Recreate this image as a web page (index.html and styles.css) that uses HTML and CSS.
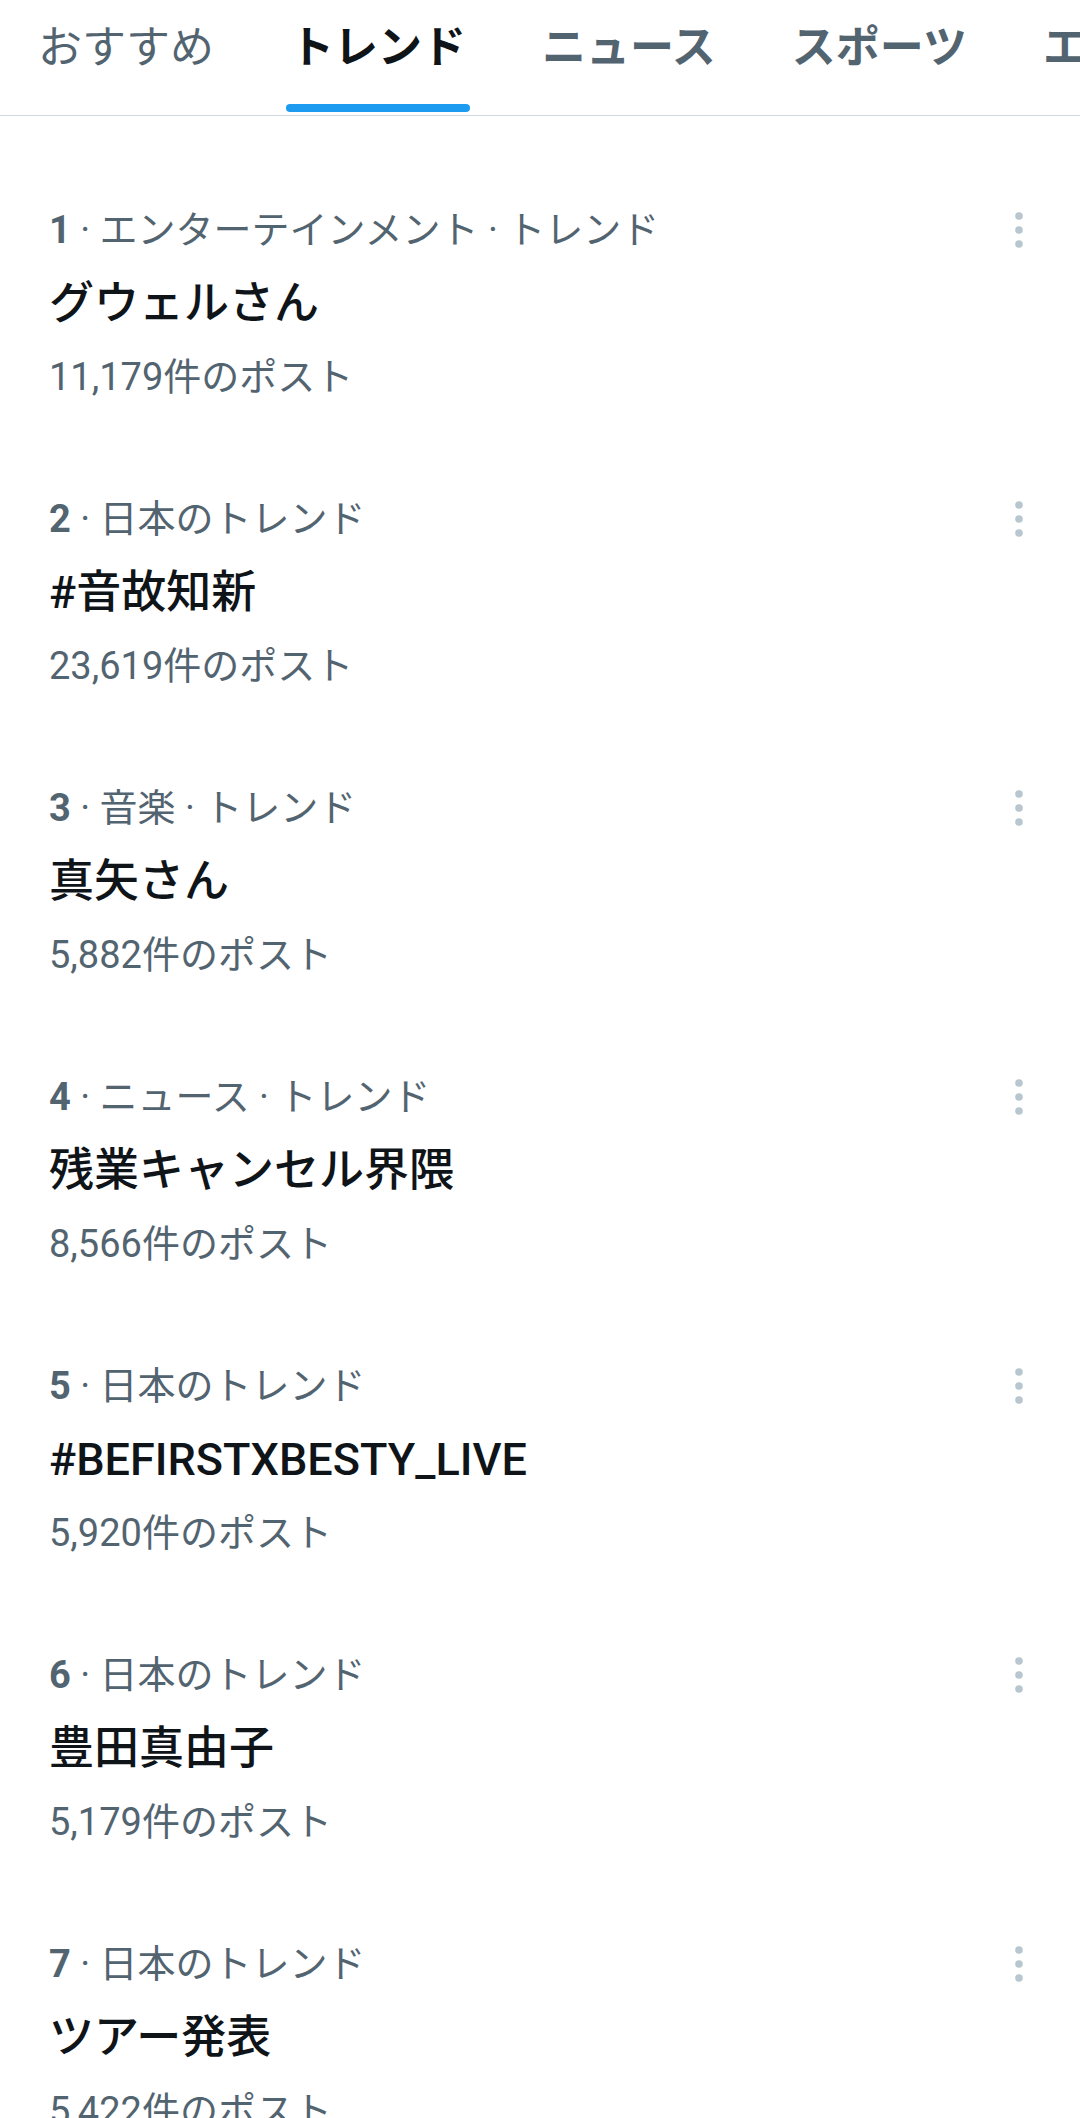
FILE: index.html
```html
<!DOCTYPE html>
<html lang="ja">
<head>
<meta charset="utf-8">
<title>トレンド</title>
<link rel="stylesheet" href="styles.css">
</head>
<body>
<nav class="tabs">
  <div class="tab tab-light"><span class="tab-label">おすすめ</span></div>
  <div class="tab tab-active"><span class="tab-label">トレンド</span><span class="tab-indicator"></span></div>
  <div class="tab"><span class="tab-label">ニュース</span></div>
  <div class="tab"><span class="tab-label">スポーツ</span></div>
  <div class="tab"><span class="tab-label">エンタメ</span></div>
</nav>
<main class="trends">
  <article class="trend">
    <div class="trend-head"><span class="trend-meta"><b class="rank">1</b> · エンターテインメント · トレンド</span><svg class="more" viewBox="0 0 40 40"><circle cx="20" cy="6" r="3.8"/><circle cx="20" cy="20" r="3.8"/><circle cx="20" cy="34" r="3.8"/></svg></div>
    <div class="trend-title">グウェルさん</div>
    <div class="trend-count">11,179件のポスト</div>
  </article>
  <article class="trend">
    <div class="trend-head"><span class="trend-meta"><b class="rank">2</b> · 日本のトレンド</span><svg class="more" viewBox="0 0 40 40"><circle cx="20" cy="6" r="3.8"/><circle cx="20" cy="20" r="3.8"/><circle cx="20" cy="34" r="3.8"/></svg></div>
    <div class="trend-title">#音故知新</div>
    <div class="trend-count">23,619件のポスト</div>
  </article>
  <article class="trend">
    <div class="trend-head"><span class="trend-meta"><b class="rank">3</b> · 音楽 · トレンド</span><svg class="more" viewBox="0 0 40 40"><circle cx="20" cy="6" r="3.8"/><circle cx="20" cy="20" r="3.8"/><circle cx="20" cy="34" r="3.8"/></svg></div>
    <div class="trend-title">真矢さん</div>
    <div class="trend-count">5,882件のポスト</div>
  </article>
  <article class="trend">
    <div class="trend-head"><span class="trend-meta"><b class="rank">4</b> · ニュース · トレンド</span><svg class="more" viewBox="0 0 40 40"><circle cx="20" cy="6" r="3.8"/><circle cx="20" cy="20" r="3.8"/><circle cx="20" cy="34" r="3.8"/></svg></div>
    <div class="trend-title">残業キャンセル界隈</div>
    <div class="trend-count">8,566件のポスト</div>
  </article>
  <article class="trend">
    <div class="trend-head"><span class="trend-meta"><b class="rank">5</b> · 日本のトレンド</span><svg class="more" viewBox="0 0 40 40"><circle cx="20" cy="6" r="3.8"/><circle cx="20" cy="20" r="3.8"/><circle cx="20" cy="34" r="3.8"/></svg></div>
    <div class="trend-title">#BEFIRSTXBESTY_LIVE</div>
    <div class="trend-count">5,920件のポスト</div>
  </article>
  <article class="trend">
    <div class="trend-head"><span class="trend-meta"><b class="rank">6</b> · 日本のトレンド</span><svg class="more" viewBox="0 0 40 40"><circle cx="20" cy="6" r="3.8"/><circle cx="20" cy="20" r="3.8"/><circle cx="20" cy="34" r="3.8"/></svg></div>
    <div class="trend-title">豊田真由子</div>
    <div class="trend-count">5,179件のポスト</div>
  </article>
  <article class="trend">
    <div class="trend-head"><span class="trend-meta"><b class="rank">7</b> · 日本のトレンド</span><svg class="more" viewBox="0 0 40 40"><circle cx="20" cy="6" r="3.8"/><circle cx="20" cy="20" r="3.8"/><circle cx="20" cy="34" r="3.8"/></svg></div>
    <div class="trend-title">ツアー発表</div>
    <div class="trend-count">5,422件のポスト</div>
  </article>
</main>
</body>
</html>
```

FILE: styles.css
```css
html, body {
  margin: 0;
  padding: 0;
  background: #ffffff;
}
body {
  width: 1080px;
  height: 2118px;
  overflow: hidden;
  font-family: Roboto, "Noto Sans CJK JP", sans-serif;
  color: #0f1419;
}
.tabs {
  display: flex;
  height: 115px;
  border-bottom: 1px solid #cfd9de;
  overflow: hidden;
  white-space: nowrap;
}
.tab {
  flex: none;
  display: flex;
  flex-direction: column;
  align-items: stretch;
  padding: 18px 38px 0;
  font-size: 44px;
  font-weight: 700;
  color: #536471;
}
.tab-label {
  display: block;
  line-height: 60px;
}
.tab-light {
  font-weight: 400;
}
.tab-active {
  color: #0f1419;
}
.tab-indicator {
  display: block;
  height: 8px;
  margin: 26px -4px 0;
  border-radius: 4px;
  background: #1d9bf0;
}
.trends {
  padding-top: 43px;
}
.trend {
  padding: 46px 41px 46px 49px;
}
.trend-head {
  display: flex;
  justify-content: space-between;
  align-items: center;
  height: 50px;
}
.trend-meta {
  font-size: 38px;
  line-height: 50px;
  color: #536471;
}
.rank {
  font-weight: 700;
}
.more {
  width: 40px;
  height: 40px;
  fill: #b8c6cf;
}
.trend-title {
  margin-top: 19px;
  font-size: 45px;
  line-height: 60px;
  font-weight: 500;
  color: #0f1419;
}
.trend-count {
  margin-top: 18px;
  font-size: 38px;
  line-height: 50px;
  color: #536471;
}
```
